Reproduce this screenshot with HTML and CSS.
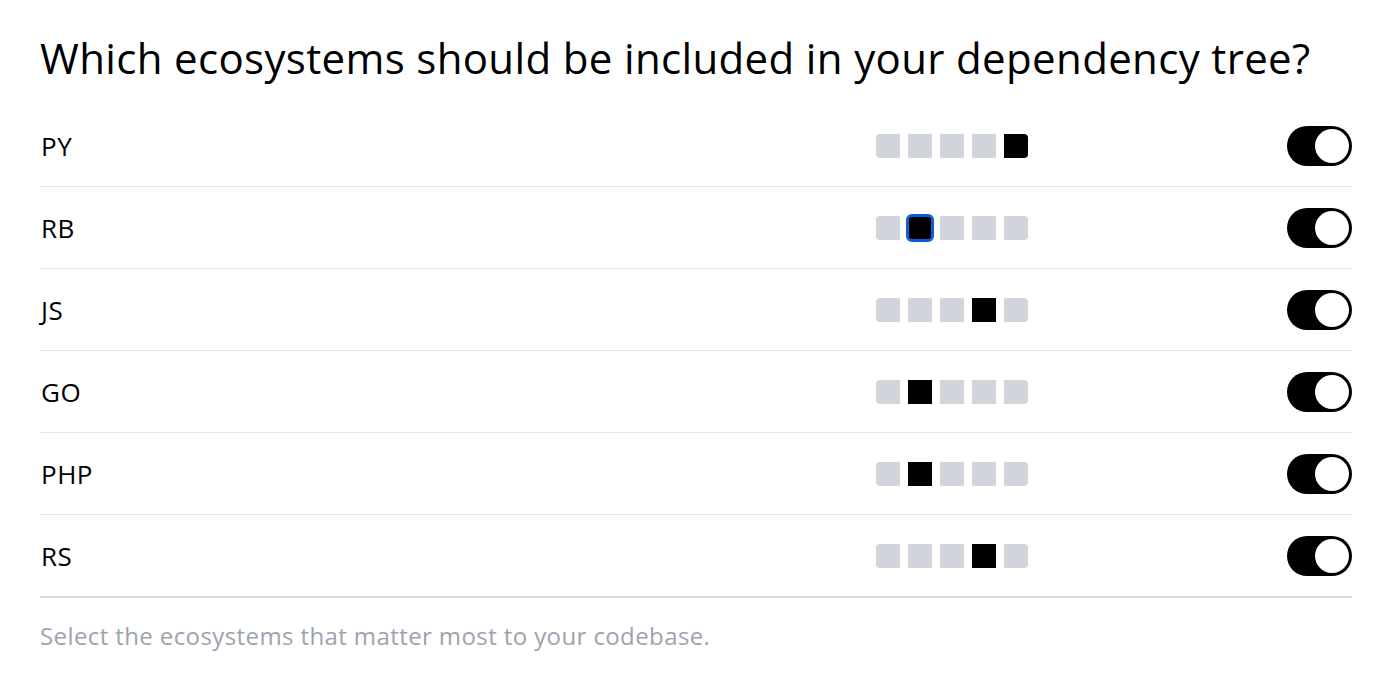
FILE: index.html
```html
<!DOCTYPE html>
<html lang="en">
<head>
<meta charset="utf-8">
<title>Ecosystems</title>
<link rel="stylesheet" href="styles.css">
</head>
<body>
<main class="panel">
  <h1 class="title">Which ecosystems should be included in your dependency tree?</h1>
  <div class="list">
    <div class="row">
      <span class="label">PY</span>
      <div class="scale"><span class="cell"></span><span class="cell"></span><span class="cell"></span><span class="cell"></span><span class="cell on"></span></div>
      <span class="toggle"><span class="knob"></span></span>
    </div>
    <div class="row">
      <span class="label">RB</span>
      <div class="scale"><span class="cell"></span><span class="cell on focus"></span><span class="cell"></span><span class="cell"></span><span class="cell"></span></div>
      <span class="toggle"><span class="knob"></span></span>
    </div>
    <div class="row">
      <span class="label">JS</span>
      <div class="scale"><span class="cell"></span><span class="cell"></span><span class="cell"></span><span class="cell on"></span><span class="cell"></span></div>
      <span class="toggle"><span class="knob"></span></span>
    </div>
    <div class="row">
      <span class="label">GO</span>
      <div class="scale"><span class="cell"></span><span class="cell on"></span><span class="cell"></span><span class="cell"></span><span class="cell"></span></div>
      <span class="toggle"><span class="knob"></span></span>
    </div>
    <div class="row">
      <span class="label">PHP</span>
      <div class="scale"><span class="cell"></span><span class="cell on"></span><span class="cell"></span><span class="cell"></span><span class="cell"></span></div>
      <span class="toggle"><span class="knob"></span></span>
    </div>
    <div class="row last">
      <span class="label">RS</span>
      <div class="scale"><span class="cell"></span><span class="cell"></span><span class="cell"></span><span class="cell on"></span><span class="cell"></span></div>
      <span class="toggle"><span class="knob"></span></span>
    </div>
  </div>
  <p class="hint">Select the ecosystems that matter most to your codebase.</p>
</main>
</body>
</html>
```

FILE: styles.css
```css
html, body {
  margin: 0;
  padding: 0;
  background: #ffffff;
}
body {
  font-family: "Open Sans", "Noto Sans", "Liberation Sans", sans-serif;
  color: #000000;
}
.panel {
  padding: 34px 40px 0 40px;
}
.title {
  margin: 0 0 23px 0;
  font-size: 42px;
  line-height: 48px;
  font-weight: 400;
  letter-spacing: 0.35px;
}
.list {
  display: flex;
  flex-direction: column;
}
.row {
  display: grid;
  grid-template-columns: 1fr auto 324px;
  align-items: center;
  height: 81px;
  border-bottom: 1px solid #e5e7eb;
}
.row.last {
  height: 81px;
  border-bottom: 2px solid #d8dbe0;
}
.label {
  font-size: 26px;
  line-height: 32px;
  letter-spacing: 0.5px;
  padding-left: 1px;
}
.scale {
  display: flex;
  gap: 8px;
}
.cell {
  display: block;
  width: 24px;
  height: 24px;
  background: #d1d5db;
}
.cell:first-child {
  border-radius: 4px 0 0 4px;
}
.cell:last-child {
  border-radius: 0 4px 4px 0;
}
.cell.on {
  background: #000000;
}
.cell.focus {
  border-radius: 4px;
  outline: 3px solid #0b5fd6;
  outline-offset: -1px;
}
.toggle {
  justify-self: end;
  display: flex;
  justify-content: flex-end;
  align-items: center;
  box-sizing: border-box;
  width: 65px;
  height: 40px;
  padding: 3px;
  border-radius: 20px;
  background: #000000;
}
.knob {
  display: block;
  width: 34px;
  height: 34px;
  border-radius: 50%;
  background: #ffffff;
}
.hint {
  margin: 22px 0 0 0;
  font-size: 24px;
  line-height: 32px;
  letter-spacing: 0.4px;
  color: #9ca3af;
}
```
